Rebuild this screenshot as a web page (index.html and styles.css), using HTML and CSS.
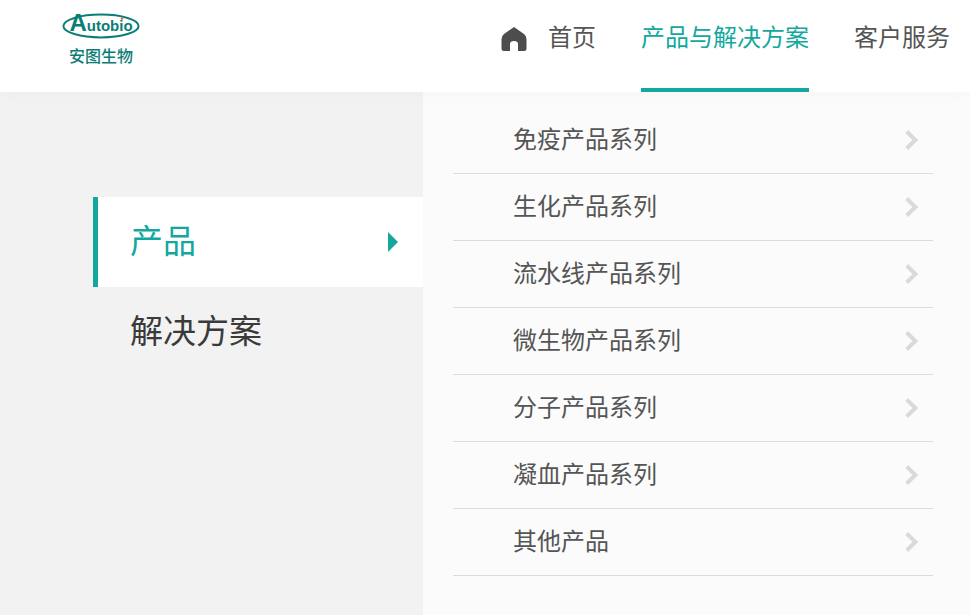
FILE: index.html
```html
<!DOCTYPE html>
<html lang="zh-CN">
<head>
    <meta charset="UTF-8">
    <meta name="viewport" content="width=device-width, initial-scale=1.0">
    <title>安图生物</title>
    <link rel="stylesheet" href="styles.css">
</head>
<body>
    <div class="header">
        <a class="logo" href="#">
            <span class="logo-mark">
                <svg class="logo-ring" width="78" height="26" viewBox="0 0 78 26">
                    <ellipse cx="39" cy="13" rx="37.6" ry="11.4" fill="none" stroke="#0b7d76" stroke-width="2"/>
                    <circle cx="60" cy="5.500" r="1.300" fill="#e8642c"/>
                </svg>
                <span class="logo-word"><span class="logo-cap">A</span>utobio</span>
            </span>
            <span class="logo-name">安图生物</span>
        </a>
        <div class="nav-bar">
            <a class="nav-home" href="#">
                <svg width="26" height="26" viewBox="0 0 26 26">
                    <path d="M13 1 L23 8 Q25.500 10 25.500 13 V22.500 Q25.500 25 23 25 H17 V18 Q17 15 13 15 Q9 15 9 18 V25 H3 Q0.500 25 0.500 22.500 V13 Q0.500 10 3 8 Z" fill="#4d4d4d"/>
                </svg>
                <span>首页</span>
            </a>
            <a class="nav-link active" href="#">产品与解决方案</a>
            <a class="nav-link" href="#">客户服务</a>
        </div>
    </div>
    <div class="menu">
        <div class="menu-side">
            <a class="side-item active" href="#">
                <span class="side-text">产品</span>
                <span class="side-arrow"></span>
            </a>
            <a class="side-item" href="#"><span class="side-text">解决方案</span></a>
        </div>
        <div class="menu-main">
            <a class="row" href="#"><span>免疫产品系列</span><span class="chevron"></span></a>
            <a class="row" href="#"><span>生化产品系列</span><span class="chevron"></span></a>
            <a class="row" href="#"><span>流水线产品系列</span><span class="chevron"></span></a>
            <a class="row" href="#"><span>微生物产品系列</span><span class="chevron"></span></a>
            <a class="row" href="#"><span>分子产品系列</span><span class="chevron"></span></a>
            <a class="row" href="#"><span>凝血产品系列</span><span class="chevron"></span></a>
            <a class="row" href="#"><span>其他产品</span><span class="chevron"></span></a>
        </div>
    </div>
</body>
</html>
```
FILE: styles.css
```css
html, body {
    height: 100%;
}
body {
    font-family: "Noto Sans CJK SC", "Noto Sans", sans-serif;
    margin: 0;
    padding: 0;
    background-color: #fbfbfb;
    overflow: hidden;
    display: flex;
    flex-direction: column;
}
a {
    color: inherit;
    text-decoration: none;
}
.header {
    position: relative;
    z-index: 2;
    flex: none;
    height: 92px;
    background-color: white;
    box-shadow: 0 0 20px rgba(0,0,0,0.03);
    display: flex;
    justify-content: space-between;
    padding-left: 62px;
}
.logo {
    display: flex;
    flex-direction: column;
    align-items: center;
    width: 78px;
    padding-top: 13px;
}
.logo-mark {
    position: relative;
    width: 78px;
    height: 26px;
    display: flex;
    justify-content: center;
}
.logo-ring {
    position: absolute;
    top: 0;
    left: 0;
}
.logo-word {
    position: relative;
    height: 26px;
    margin-top: -3px;
    font-family: "Liberation Sans", sans-serif;
    font-weight: bold;
    font-size: 15px;
    line-height: 26px;
    color: #0b7d76;
    white-space: nowrap;
}
.logo-cap {
    font-size: 24px;
}
.logo-name {
    font-size: 16px;
    font-weight: 500;
    line-height: 20px;
    margin-top: 6px;
    color: #0b7d76;
    white-space: nowrap;
}
.nav-bar {
    display: flex;
    color: #555;
    font-size: 24px;
    line-height: 72px;
    margin-right: 20px;
}
.nav-home {
    display: flex;
    align-items: flex-start;
    gap: 21px;
    margin-right: 45px;
}
.nav-home svg {
    margin-top: 26px;
}
.nav-link {
    height: 88px;
    margin-right: 45px;
    border-bottom: 4px solid transparent;
    white-space: nowrap;
}
.nav-link:last-child {
    margin-right: 0;
}
.nav-link.active {
    color: #13a89e;
    border-bottom-color: #13a89e;
}
.menu {
    flex: 1;
    display: flex;
}
.menu-side {
    width: 330px;
    padding: 105px 0 0 93px;
    background-color: #f2f2f2;
    font-size: 33px;
    color: #3a3a3a;
}
.side-item {
    height: 90px;
    padding-left: 32px;
    padding-right: 25px;
    border-left: 5px solid transparent;
    display: flex;
    align-items: center;
    justify-content: space-between;
}
.side-text {
    margin-bottom: 7px;
}
.side-item.active {
    background-color: white;
    border-left-color: #13a89e;
    color: #13a89e;
}
.side-arrow {
    border-left: 10px solid #13a89e;
    border-top: 10px solid transparent;
    border-bottom: 10px solid transparent;
}
.menu-main {
    flex: 1;
    padding: 15px 37px 0 30px;
    background-color: #fbfbfb;
}
.row {
    height: 66px;
    border-bottom: 1px solid #dcdcdc;
    padding: 0 15px 0 60px;
    font-size: 24px;
    color: #555;
    display: flex;
    align-items: center;
    justify-content: space-between;
}
.row span:first-child {
    margin-bottom: 6px;
}
.chevron {
    width: 14px;
    height: 14px;
    border-top: 4px solid #dadada;
    border-right: 4px solid #dadada;
    box-sizing: border-box;
    transform: rotate(45deg) translate(-2px, 2px);
}
```
